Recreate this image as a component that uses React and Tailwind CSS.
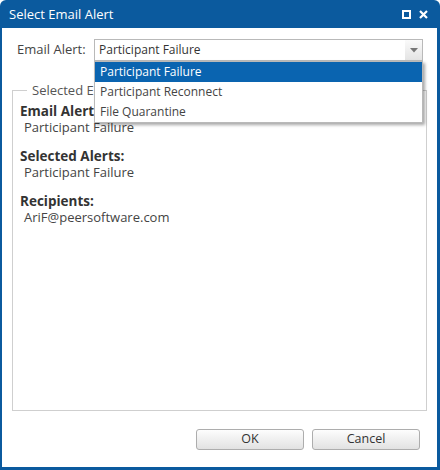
import React from 'react';

const font = { fontFamily: '"Open Sans", "Noto Sans", sans-serif' };

const options = ['Participant Failure', 'Participant Reconnect', 'File Quarantine'];

const Section = ({ title, value }) => (
  <div className="mb-[14px]">
    <div className="text-[13.5px] font-bold leading-[15px] text-[#333]">{title}</div>
    <div className="pl-[4px] text-[13px] leading-[16px] text-[#444]">{value}</div>
  </div>
);

const App = () => {
  return (
    <div
      className="w-[440px] h-[470px] bg-[#0b5a9e] rounded-t-[6px] flex flex-col pl-[2px] pr-[3px] pb-[3px] overflow-hidden"
      style={font}
    >
      <div className="h-[28px] flex items-center justify-between pl-[7px] pr-[9px] text-white">
        <span className="text-[13px] leading-none">Select Email Alert</span>
        <div className="flex items-center gap-[8px]">
          <svg width="9" height="9" viewBox="0 0 9 9">
            <rect x="1" y="1" width="7" height="7" fill="none" stroke="white" strokeWidth="2" />
          </svg>
          <svg width="9" height="9" viewBox="0 0 9 9">
            <path d="M1 1 L8 8 M8 1 L1 8" stroke="white" strokeWidth="2.2" />
          </svg>
        </div>
      </div>

      <div className="flex-1 bg-white relative flex flex-col px-[10px] pt-[11px] text-[#444]">
        <div className="flex items-center">
          <span className="text-[13px] w-[82px] pl-[5px] text-[#444]">Email Alert:</span>
          <div className="w-[329px] h-[22px] border border-[#b9b9b9] flex items-stretch bg-white">
            <div className="flex-1 flex items-center pl-[4px] text-[12px] text-[#333]">Participant Failure</div>
            <div className="w-[17px] flex items-center justify-center bg-gradient-to-b from-[#fafafa] to-[#e4e4e4]">
              <svg width="8" height="5" viewBox="0 0 8 5">
                <path d="M0 0 H8 L4 4.5 Z" fill="#777" />
              </svg>
            </div>
          </div>
        </div>

        <fieldset className="mt-[22px] h-[328px] border border-[#cfcfcf] px-[7px] pt-[7px] min-w-0">
          <legend className="ml-[7px] px-[5px] text-[13px] text-[#555] leading-[14px]">Selected Email Alert</legend>
          <Section title="Email Alert:" value="Participant Failure" />
          <Section title="Selected Alerts:" value="Participant Failure" />
          <Section title="Recipients:" value="AriF@peersoftware.com" />
        </fieldset>

        <div className="flex justify-end gap-[8px] mt-[18px] pr-[7px]">
          <button className="w-[108px] h-[21px] border border-[#adadad] rounded-[3px] bg-gradient-to-b from-[#fdfdfd] to-[#e2e2e2] text-[12.5px] text-[#333]">
            OK
          </button>
          <button className="w-[108px] h-[21px] border border-[#adadad] rounded-[3px] bg-gradient-to-b from-[#fdfdfd] to-[#e2e2e2] text-[12.5px] text-[#333]">
            Cancel
          </button>
        </div>

        <ul className="absolute left-[92px] top-[33px] w-[329px] border border-[#b9b9b9] bg-white shadow-[2px_2px_3px_rgba(0,0,0,0.35)] py-0">
          {options.map((o, i) => (
            <li
              key={o}
              className={`h-[20px] flex items-center pl-[5px] text-[12px] ${
                i === 0 ? 'bg-[#0a64b0] text-white' : 'text-[#444]'
              }`}
            >
              {o}
            </li>
          ))}
        </ul>
      </div>
    </div>
  );
};

export default App;
